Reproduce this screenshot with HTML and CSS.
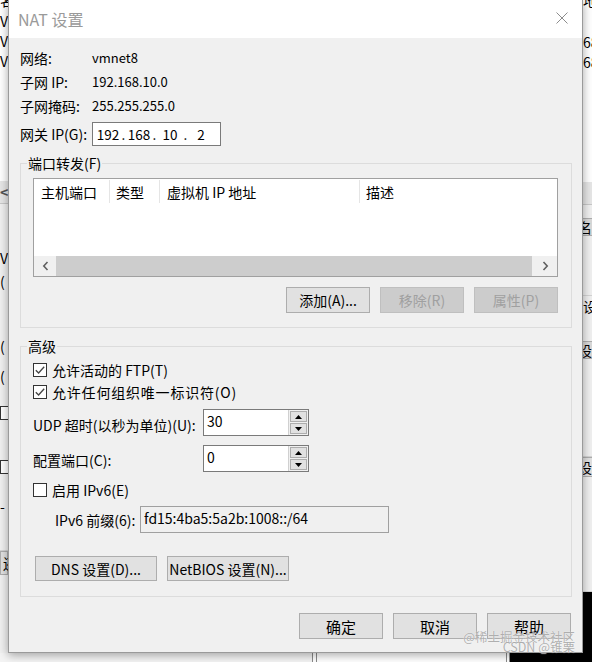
FILE: index.html
```html
<!DOCTYPE html>
<html lang="zh-CN">
<head>
  <meta charset="UTF-8">
  <meta name="viewport" content="width=device-width, initial-scale=1.0">
  <title>NAT 设置</title>
  <link rel="stylesheet" href="styles.css">
</head>
<body>
  <div class="screen">
    <!-- window behind the dialog, left edge -->
    <div class="side side-left">
      <div class="side-cap">名</div>
      <div class="side-line">V</div>
      <div class="side-line">V</div>
      <div class="side-line">V</div>
      <div class="side-gap gap-110"></div>
      <div class="side-scroll">&lt;</div>
      <div class="side-gap gap-41 grey"></div>
      <div class="side-line tall grey">V</div>
      <div class="side-line grey">(</div>
      <div class="side-gap gap-45 grey"></div>
      <div class="side-line grey">(</div>
      <div class="side-gap gap-10 grey"></div>
      <div class="side-line grey">(</div>
      <div class="side-gap gap-20 grey"></div>
      <div class="side-box"></div>
      <div class="side-gap gap-40 grey"></div>
      <div class="side-box"></div>
      <div class="side-gap gap-22 grey"></div>
      <div class="side-line grey">-</div>
      <div class="side-gap gap-35 grey lined"></div>
      <div class="side-btn">还</div>
      <div class="side-gap gap-fill grey"></div>
    </div>

    <div class="dialog">
      <div class="titlebar">
        <span class="title">NAT 设置</span>
        <svg class="close" width="12" height="12" viewBox="0 0 12 12">
          <path d="M0.5 0.5L11.5 11.5M11.5 0.5L0.5 11.5" stroke="#8c8c8c" stroke-width="1" fill="none"/>
        </svg>
      </div>

      <div class="content">
        <div class="info">
          <div class="info-row"><span class="info-label">网络:</span><span class="info-value">vmnet8</span></div>
          <div class="info-row"><span class="info-label">子网 IP:</span><span class="info-value">192.168.10.0</span></div>
          <div class="info-row"><span class="info-label">子网掩码:</span><span class="info-value">255.255.255.0</span></div>
          <div class="info-row gateway">
            <span class="info-label">网关 IP(G):</span>
            <div class="ip-box">
              <span class="ip-field">192</span><span class="ip-dot">.</span>
              <span class="ip-field">168</span><span class="ip-dot">.</span>
              <span class="ip-field">10</span><span class="ip-dot">.</span>
              <span class="ip-field">2</span>
            </div>
          </div>
        </div>

        <fieldset class="group ports">
          <legend>端口转发(F)</legend>
          <div class="list">
            <div class="list-head">
              <span class="col col-port">主机端口</span>
              <span class="col col-type">类型</span>
              <span class="col col-ip">虚拟机 IP 地址</span>
              <span class="col col-desc">描述</span>
            </div>
            <div class="list-body"></div>
            <div class="hscroll">
              <span class="arrow arrow-left">
                <svg width="7" height="10" viewBox="0 0 7 10"><path d="M5.5 1L1.8 5L5.5 9" fill="none" stroke="#606060" stroke-width="1.6"/></svg>
              </span>
              <div class="thumb"></div>
              <span class="arrow arrow-right">
                <svg width="7" height="10" viewBox="0 0 7 10"><path d="M1.5 1L5.2 5L1.5 9" fill="none" stroke="#606060" stroke-width="1.6"/></svg>
              </span>
            </div>
          </div>
          <div class="btn-row">
            <button class="btn">添加(A)...</button>
            <button class="btn" disabled>移除(R)</button>
            <button class="btn" disabled>属性(P)</button>
          </div>
        </fieldset>

        <fieldset class="group advanced">
          <legend>高级</legend>
          <div class="check-row">
            <span class="check"><svg width="12" height="12" viewBox="0 0 12 12"><path d="M1.8 6.2L4.6 9L10.2 2.8" fill="none" stroke="#444" stroke-width="1.3"/></svg></span>
            <span>允许活动的 FTP(T)</span>
          </div>
          <div class="check-row">
            <span class="check"><svg width="12" height="12" viewBox="0 0 12 12"><path d="M1.8 6.2L4.6 9L10.2 2.8" fill="none" stroke="#444" stroke-width="1.3"/></svg></span>
            <span class="wide-cjk">允许任何组织唯一标识符(O)</span>
          </div>

          <div class="field-row udp">
            <span class="field-label">UDP 超时(以秒为单位)(U):</span>
            <div class="spin">
              <span class="spin-value">30</span>
              <div class="spin-btns">
                <span class="spin-btn"><svg width="7" height="4" viewBox="0 0 7 4"><path d="M3.5 0L7 4H0Z" fill="#000"/></svg></span>
                <span class="spin-btn"><svg width="7" height="4" viewBox="0 0 7 4"><path d="M0 0H7L3.5 4Z" fill="#000"/></svg></span>
              </div>
            </div>
          </div>

          <div class="field-row config">
            <span class="field-label">配置端口(C):</span>
            <div class="spin">
              <span class="spin-value">0</span>
              <div class="spin-btns">
                <span class="spin-btn"><svg width="7" height="4" viewBox="0 0 7 4"><path d="M3.5 0L7 4H0Z" fill="#000"/></svg></span>
                <span class="spin-btn"><svg width="7" height="4" viewBox="0 0 7 4"><path d="M0 0H7L3.5 4Z" fill="#000"/></svg></span>
              </div>
            </div>
          </div>

          <div class="check-row ipv6-check">
            <span class="check"></span>
            <span>启用 IPv6(E)</span>
          </div>

          <div class="field-row prefix">
            <span class="prefix-label">IPv6 前缀(6):</span>
            <div class="prefix-box">fd15:4ba5:5a2b:1008::/64</div>
          </div>

          <div class="btn-row left">
            <button class="btn wide">DNS 设置(D)...</button>
            <button class="btn wide">NetBIOS 设置(N)...</button>
          </div>
        </fieldset>
      </div>

      <div class="footer">
        <button class="btn big">确定</button>
        <button class="btn big">取消</button>
        <button class="btn big">帮助</button>
      </div>

      <div class="watermark">
        <div>@稀土掘金技术社区</div>
        <div>CSDN @锥栗</div>
      </div>
    </div>

    <!-- window behind the dialog, right edge -->
    <div class="side side-right">
      <div class="side-cap">地</div>
      <div class="side-gap gap-27"></div>
      <div class="side-line">68</div>
      <div class="side-line">68</div>
      <div class="side-gap gap-110"></div>
      <div class="side-scroll"></div>
      <div class="side-gap gap-13 grey"></div>
      <div class="side-btn short">名</div>
      <div class="side-gap gap-60 grey lined"></div>
      <div class="side-line grey">设</div>
      <div class="side-gap gap-25 grey"></div>
      <div class="side-btn short">设</div>
      <div class="side-gap gap-98 grey lined"></div>
      <div class="side-btn">设</div>
      <div class="side-gap gap-115 grey lined"></div>
      <div class="side-gap gap-fill black"></div>
    </div>

    <div class="under">
      <div class="under-part u-light"></div>
      <div class="under-part u-line"></div>
      <div class="under-part u-white-3"></div>
      <div class="under-part u-line"></div>
      <div class="under-part u-white"></div>
      <div class="under-part u-line"></div>
      <div class="under-part u-white-2"></div>
      <div class="under-part u-line"></div>
      <div class="under-part u-black"></div>
    </div>
  </div>
</body>
</html>
```

FILE: styles.css
```css
* {
  box-sizing: border-box;
}

body {
  margin: 0;
  font-family: "Noto Sans CJK SC", sans-serif;
  font-size: 14px;
  color: #000;
  background-color: #fff;
}

.screen {
  width: 592px;
  height: 662px;
  display: grid;
  grid-template-columns: 8px 575px 9px;
  grid-template-rows: 653px 9px;
  overflow: hidden;
}

/* background window strips */
.side {
  display: flex;
  flex-direction: column;
  overflow: hidden;
  background-color: #fff;
  line-height: 20px;
  white-space: nowrap;
}

.side-left {
  grid-column: 1;
  grid-row: 1;
}

.side-right {
  grid-column: 3;
  grid-row: 1;
}

.side-cap {
  height: 18px;
  line-height: 14px;
  margin-top: -7px;
  flex-shrink: 0;
}

.side-right .side-cap {
  height: 12px;
}

.side-line {
  height: 20px;
  flex-shrink: 0;
}

.side-line.tall {
  height: 26px;
  line-height: 26px;
}

.side-gap {
  flex-shrink: 0;
}

.gap-10 { height: 10px; }
.gap-13 { height: 13px; }
.gap-20 { height: 20px; }
.gap-22 { height: 22px; }
.gap-25 { height: 25px; }
.gap-27 { height: 27px; }
.gap-35 { height: 35px; }
.gap-40 { height: 40px; }
.gap-41 { height: 41px; }
.gap-45 { height: 45px; }
.gap-60 { height: 60px; }
.gap-98 { height: 98px; }
.gap-110 { height: 110px; }
.gap-115 { height: 115px; }

.gap-fill {
  flex: 1;
}

.grey {
  background-color: #f0f0f0;
}

.black {
  background-color: #000;
}

.lined {
  border-bottom: 1px solid #d4d4d4;
}

.side-scroll {
  height: 23px;
  flex-shrink: 0;
  background-color: #e6e6e6;
  border-bottom: 1px solid #c8c8c8;
  color: #555;
  line-height: 22px;
  font-weight: bold;
}

.side-box {
  width: 14px;
  height: 14px;
  flex-shrink: 0;
  border: 1px solid #333;
  background-color: #fff;
}

.side-btn {
  height: 24px;
  flex-shrink: 0;
  background-color: #e1e1e1;
  border: 1px solid #adadad;
  line-height: 22px;
  padding-left: 2px;
}

.side-btn.short {
  height: 18px;
  line-height: 16px;
  background-color: #d9d9d9;
}

.side-right .side-btn {
  padding-left: 0;
  margin-left: -6px;
  width: 20px;
}

.side-right .side-btn:not(.short) {
  height: 20px;
  line-height: 18px;
}

.under {
  grid-column: 1 / 4;
  grid-row: 2;
  display: flex;
}

.under-part {
  height: 9px;
}

.u-light { width: 312px; background-color: #f4f4f4; }
.u-line { width: 1px; background-color: #8a8a8a; }
.u-white-3 { width: 3px; background-color: #fff; }
.u-white { width: 189px; background-color: #fff; }
.u-white-2 { width: 2px; background-color: #fff; }
.u-black { flex: 1; background-color: #000; }

/* dialog */
.dialog {
  grid-column: 2;
  grid-row: 1;
  position: relative;
  z-index: 1;
  display: flex;
  flex-direction: column;
  background-color: #f0f0f0;
  border: 1px solid #9a9a9a;
  border-top: none;
  box-shadow: 0 2px 9px rgba(0, 0, 0, 0.35);
}

.titlebar {
  height: 38px;
  flex-shrink: 0;
  display: flex;
  align-items: center;
  justify-content: space-between;
  padding: 0 14px 0 9px;
  background-color: #fff;
}

.title {
  font-size: 16px;
  line-height: 20px;
  color: #9a9a9a;
}

.close {
  display: block;
  margin-top: -2px;
}

.content {
  padding: 8px 10px 0 11px;
}

.info-row {
  display: flex;
  align-items: center;
  height: 24px;
  line-height: 20px;
}

.info-label {
  width: 72px;
  flex-shrink: 0;
}

.info-value {
  font-size: 13px;
}

.info-row.gateway {
  margin-top: 4px;
}

.ip-box {
  width: 129px;
  height: 24px;
  display: flex;
  align-items: center;
  padding-left: 3px;
  border: 1px solid #7a7a7a;
  background-color: #fff;
  font-size: 13.5px;
}

.ip-field {
  width: 24px;
  text-align: center;
}

.ip-dot {
  width: 7px;
  text-align: center;
}

/* group boxes */
.group {
  margin: 8px 0 0 0;
  padding: 6px 13px 14px 12px;
  border: 1px solid #dcdcdc;
  min-width: 0;
}

.group legend {
  margin-left: -6px;
  padding: 0 1px;
  line-height: 18px;
}

.group.advanced {
  margin-top: 9px;
  padding-top: 4px;
  padding-bottom: 15px;
}

.list {
  height: 99px;
  display: flex;
  flex-direction: column;
  border: 1px solid #a0a0a0;
  background-color: #fff;
}

.list-head {
  height: 25px;
  display: flex;
  flex-shrink: 0;
}

.col {
  display: flex;
  align-items: center;
  border-right: 1px solid #e5e5e5;
  margin: 1px 0 1px 0;
  white-space: nowrap;
}

.col-port { width: 76px; padding-left: 7px; }
.col-type { width: 50px; padding-left: 6px; }
.col-ip { width: 200px; padding-left: 7px; }
.col-desc { flex: 1; padding-left: 6px; border-right: none; }

.list-body {
  flex: 1;
}

.hscroll {
  height: 20px;
  flex-shrink: 0;
  display: flex;
  background-color: #f0f0f0;
}

.arrow {
  display: flex;
  align-items: center;
  justify-content: center;
}

.arrow svg {
  display: block;
}

.arrow-left { width: 22px; }
.arrow-right { width: 24px; margin-left: 1px; }

.thumb {
  flex: 1;
  background-color: #cdcdcd;
}

/* buttons */
.btn-row {
  display: flex;
  justify-content: flex-end;
  gap: 10px;
  margin-top: 10px;
}

.btn-row.left {
  justify-content: flex-start;
  margin-top: 23px;
  padding-left: 2px;
}

.btn {
  width: 84px;
  height: 26px;
  padding: 0;
  display: flex;
  align-items: center;
  justify-content: center;
  font-family: inherit;
  font-size: 14px;
  color: #000;
  background-color: #e1e1e1;
  border: 1px solid #adadad;
  border-radius: 0;
  white-space: nowrap;
}

.btn:disabled {
  color: #a0a0a0;
  background-color: #cccccc;
  border-color: #bfbfbf;
}

.btn.wide {
  width: 122px;
  height: 25px;
}

.btn.big {
  font-size: 15px;
}

/* advanced section */
.check-row {
  display: flex;
  align-items: center;
  gap: 5px;
  height: 22px;
  line-height: 20px;
}

.check {
  width: 14px;
  height: 14px;
  flex-shrink: 0;
  display: flex;
  align-items: center;
  justify-content: center;
  border: 1px solid #333;
  background-color: #fff;
}

.check svg {
  display: block;
}

.wide-cjk {
  letter-spacing: 0.8px;
}

.check-row.ipv6-check {
  margin-top: 7px;
}

.field-row {
  display: flex;
  align-items: center;
  height: 27px;
  line-height: 20px;
}

.field-row.udp {
  margin-top: 6px;
}

.field-row.config {
  margin-top: 9px;
}

.field-row.udp .field-label {
  padding-top: 4px;
}

.field-row.config .field-label {
  padding-top: 3px;
}

.field-label {
  width: 170px;
  flex-shrink: 0;
  white-space: nowrap;
}

.spin {
  width: 106px;
  height: 27px;
  display: flex;
  border: 1px solid #7a7a7a;
  background-color: #fff;
}

.spin-value {
  flex: 1;
  padding: 1px 0 0 3px;
  line-height: 20px;
}

.spin-btns {
  width: 20px;
  display: flex;
  flex-direction: column;
  gap: 1px;
  padding: 1px;
  background-color: #f0f0f0;
  border-left: 1px solid #d0d0d0;
}

.spin-btn {
  flex: 1;
  display: flex;
  align-items: center;
  justify-content: center;
  background-color: #e1e1e1;
  border: 1px solid #adadad;
}

.spin-btn svg {
  display: block;
}

.field-row.prefix {
  margin-top: 5px;
}

.prefix-label {
  width: 107px;
  flex-shrink: 0;
  padding-left: 22px;
  white-space: nowrap;
}

.prefix-box {
  width: 249px;
  height: 27px;
  padding: 1px 0 0 3px;
  line-height: 20px;
  border: 1px solid #a0a0a0;
  background-color: #f0f0f0;
}

.footer {
  display: flex;
  justify-content: flex-end;
  gap: 10px;
  margin-top: 16px;
  padding-right: 11px;
}

.watermark {
  position: absolute;
  right: 7px;
  bottom: 0;
  text-align: right;
  font-size: 12.5px;
  line-height: 10px;
  color: rgba(150, 150, 150, 0.75);
  text-shadow: 0 0 1px #fff;
  white-space: nowrap;
}
```
